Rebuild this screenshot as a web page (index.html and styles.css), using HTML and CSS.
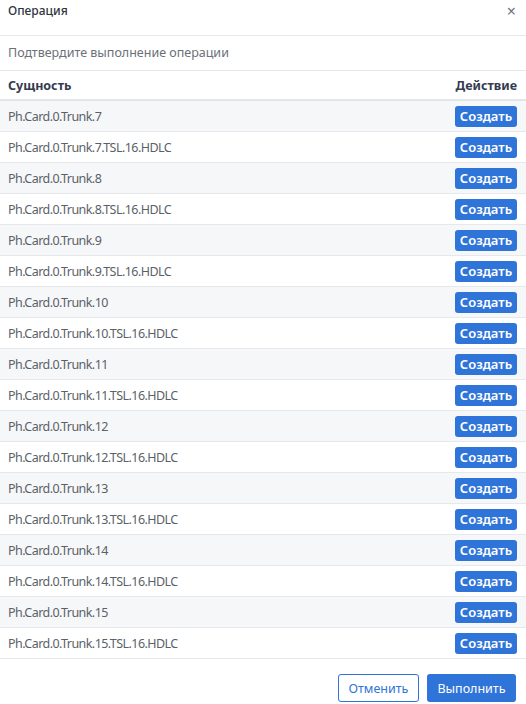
FILE: index.html
```html
<!DOCTYPE html>
<html lang="ru">
<head>
<meta charset="utf-8">
<link rel="stylesheet" href="styles.css">
</head>
<body>
<div class="dialog">
  <div class="head">
    <span class="title">Операция</span>
    <span class="close">×</span>
  </div>
  <div class="sub">Подтвердите выполнение операции</div>
  <div class="table">
    <div class="thead"><span>Сущность</span><span>Действие</span></div>
    <div class="row odd"><span class="name">Ph.Card.0.Trunk.7</span><button class="btn-create">Создать</button></div>
    <div class="row"><span class="name">Ph.Card.0.Trunk.7.TSL.16.HDLC</span><button class="btn-create">Создать</button></div>
    <div class="row odd"><span class="name">Ph.Card.0.Trunk.8</span><button class="btn-create">Создать</button></div>
    <div class="row"><span class="name">Ph.Card.0.Trunk.8.TSL.16.HDLC</span><button class="btn-create">Создать</button></div>
    <div class="row odd"><span class="name">Ph.Card.0.Trunk.9</span><button class="btn-create">Создать</button></div>
    <div class="row"><span class="name">Ph.Card.0.Trunk.9.TSL.16.HDLC</span><button class="btn-create">Создать</button></div>
    <div class="row odd"><span class="name">Ph.Card.0.Trunk.10</span><button class="btn-create">Создать</button></div>
    <div class="row"><span class="name">Ph.Card.0.Trunk.10.TSL.16.HDLC</span><button class="btn-create">Создать</button></div>
    <div class="row odd"><span class="name">Ph.Card.0.Trunk.11</span><button class="btn-create">Создать</button></div>
    <div class="row"><span class="name">Ph.Card.0.Trunk.11.TSL.16.HDLC</span><button class="btn-create">Создать</button></div>
    <div class="row odd"><span class="name">Ph.Card.0.Trunk.12</span><button class="btn-create">Создать</button></div>
    <div class="row"><span class="name">Ph.Card.0.Trunk.12.TSL.16.HDLC</span><button class="btn-create">Создать</button></div>
    <div class="row odd"><span class="name">Ph.Card.0.Trunk.13</span><button class="btn-create">Создать</button></div>
    <div class="row"><span class="name">Ph.Card.0.Trunk.13.TSL.16.HDLC</span><button class="btn-create">Создать</button></div>
    <div class="row odd"><span class="name">Ph.Card.0.Trunk.14</span><button class="btn-create">Создать</button></div>
    <div class="row"><span class="name">Ph.Card.0.Trunk.14.TSL.16.HDLC</span><button class="btn-create">Создать</button></div>
    <div class="row odd"><span class="name">Ph.Card.0.Trunk.15</span><button class="btn-create">Создать</button></div>
    <div class="row"><span class="name">Ph.Card.0.Trunk.15.TSL.16.HDLC</span><button class="btn-create">Создать</button></div>
  </div>
  <div class="foot">
    <button class="btn-cancel">Отменить</button>
    <button class="btn-ok">Выполнить</button>
  </div>
</div>
</body>
</html>
```
FILE: styles.css
```css
* { box-sizing: border-box; }
html, body { margin: 0; padding: 0; background: #fff; }
body { font-family: "Noto Sans", "Open Sans", sans-serif; color: #555a63; }
.dialog { width: 526px; height: 704px; display: flex; flex-direction: column; }
.head {
  height: 36px; display: flex; justify-content: space-between; align-items: flex-start;
  padding: 2px 10px 0 8px; border-bottom: 1px solid #e6e8eb;
}
.title { font-size: 12px; color: #2f3440; font-weight: 500; line-height: 18px; }
.close { font-size: 16px; color: #6f747d; line-height: 18px; }
.sub {
  height: 35px; display: flex; align-items: center; padding: 0 8px 1px;
  font-size: 12.5px; color: #6b7079; border-bottom: 1px solid #e6e8eb;
}
.thead {
  height: 30px; display: flex; justify-content: space-between; align-items: center;
  padding: 0 9px 0 8px; font-size: 12.5px; font-weight: 700; color: #353b4f;
  border-bottom: 2px solid #e3e5e8;
}
.row {
  height: 31px; display: flex; justify-content: space-between; align-items: center;
  padding: 0 9px 0 8px; border-bottom: 1px solid #e6e8eb;
}
.row.odd { background: #f6f7f9; }
.name { font-size: 12.5px; color: #5a5f68; letter-spacing: -0.55px; }
button { font-family: inherit; cursor: pointer; }
.btn-create {
  width: 62px; height: 21px; border: 0; border-radius: 3px; background: #2f74d8;
  color: #fff; font-size: 13px; font-weight: 600; padding: 0; line-height: 21px;
}
.foot {
  display: flex; justify-content: flex-end; gap: 8px; padding: 15px 10px 0 0;
}
.btn-cancel {
  width: 81px; height: 28px; background: #fff; border: 1px solid #2f74d8; border-radius: 3px;
  color: #2f74d8; font-size: 12.5px; padding: 0;
}
.btn-ok {
  width: 89px; height: 28px; background: #2f74d8; border: 0; border-radius: 3px;
  color: #fff; font-size: 12.5px; padding: 0;
}
```
